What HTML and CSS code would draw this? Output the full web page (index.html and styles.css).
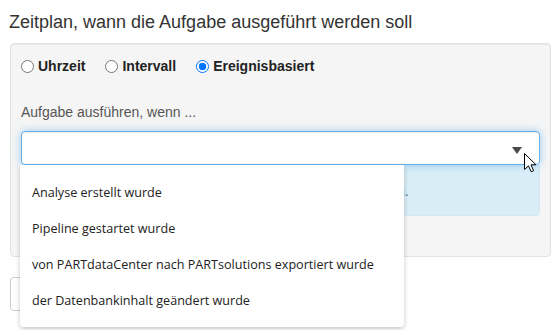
FILE: index.html
```html
<!DOCTYPE html>
<html lang="de">
<head>
  <meta charset="UTF-8">
  <title>Zeitplan</title>
  <link rel="stylesheet" href="styles.css">
</head>
<body>

<h2 class="title">Zeitplan, wann die Aufgabe ausgeführt werden soll</h2>

<div class="panel">
  <div class="radio-row">
    <label class="radio"><input type="radio" name="mode"> Uhrzeit</label>
    <label class="radio"><input type="radio" name="mode"> Intervall</label>
    <label class="radio"><input type="radio" name="mode" checked> Ereignisbasiert</label>
  </div>

  <div class="field-label">Aufgabe ausführen, wenn ...</div>

  <div class="select-wrap">
    <div class="select">
      <span class="caret"></span>
    </div>
    <ul class="dropdown">
      <li>Analyse erstellt wurde</li>
      <li>Pipeline gestartet wurde</li>
      <li>von PARTdataCenter nach PARTsolutions exportiert wurde</li>
      <li>der Datenbankinhalt geändert wurde</li>
    </ul>
    <svg class="cursor" width="13" height="20" viewBox="0 0 13 20">
      <path d="M0.5 0.5 L0.5 16.5 L4.5 12.8 L7.2 18.8 L9.6 17.7 L7 11.8 L12 11.8 Z" fill="#fff" stroke="#000" stroke-width="1"/>
    </svg>
  </div>

  <div class="alert">Wählen Sie hier ein Ereignis aus, um die Aufgabe zu starten.</div>
</div>

<button class="btn">Speichern</button>

</body>
</html>
```

FILE: styles.css
```css
html {
  min-height: 330px;
}

body {
  margin: 0;
  min-height: 330px;
  padding: 0 6px 0 10px;
  font-family: "Liberation Sans", Arial, sans-serif;
  font-size: 14px;
  color: #333;
  background: #fff;
}

.title {
  margin: 12px 0 11px -1px;
  font-size: 18px;
  line-height: 20px;
  font-weight: normal;
  color: #333;
}

.panel {
  padding: 13px 10px 20px 10px;
  background-color: #f5f5f5;
  border: 1px solid #e3e3e3;
  border-radius: 4px;
  box-shadow: inset 0 1px 1px rgba(0, 0, 0, 0.05);
}

.radio-row {
  display: flex;
  gap: 20px;
  line-height: 18px;
}

.radio {
  display: flex;
  align-items: center;
  gap: 4px;
  font-weight: bold;
  color: #222;
}

.radio input {
  appearance: none;
  -webkit-appearance: none;
  width: 13px;
  height: 13px;
  margin: 0;
  border: 1px solid #767676;
  border-radius: 50%;
  background: #fff;
}

.radio input:checked {
  border-color: #0075ff;
  background: radial-gradient(circle, #0075ff 0 3.5px, #fff 4px);
}

.field-label {
  margin-top: 27px;
  line-height: 20px;
  color: #555;
}

.select-wrap {
  position: relative;
  margin-top: 9px;
}

.select {
  display: flex;
  justify-content: flex-end;
  align-items: center;
  height: 32px;
  padding: 0 17px 0 12px;
  background: #fff;
  border: 1px solid #66afe9;
  border-radius: 4px;
  box-shadow: inset 0 1px 1px rgba(0, 0, 0, 0.075), 0 0 8px rgba(102, 175, 233, 0.6);
}

.caret {
  width: 0;
  height: 0;
  margin-top: 4px;
  border-left: 5px solid transparent;
  border-right: 5px solid transparent;
  border-top: 7px solid #4a4a4a;
}

.dropdown {
  position: absolute;
  top: 100%;
  left: -1px;
  z-index: 2;
  width: 384px;
  margin: 0;
  padding: 10px 0 8px;
  list-style: none;
  background: #fff;
  border-radius: 0 0 4px 4px;
  box-shadow: 0 2px 5px rgba(0, 0, 0, 0.22);
  font-family: "Open Sans", "Noto Sans", sans-serif;
  font-size: 12.6px;
  color: #222;
}

.dropdown li {
  height: 36px;
  line-height: 36px;
  padding-left: 12px;
}

.cursor {
  position: absolute;
  top: 22px;
  left: 503px;
  z-index: 3;
}

.alert {
  margin-bottom: 20px;
  padding: 15px 10px 14px;
  line-height: 20px;
  background-color: #d9edf7;
  border: 1px solid #d2e9f4;
  border-radius: 0 0 4px 4px;
  color: #31708f;
}

.btn {
  margin-top: 20px;
  height: 34px;
  padding: 0 12px;
  font-family: "Liberation Sans", Arial, sans-serif;
  font-size: 14px;
  color: #333;
  background: #fff;
  border: 1px solid #ccc;
  border-radius: 4px;
}
```
